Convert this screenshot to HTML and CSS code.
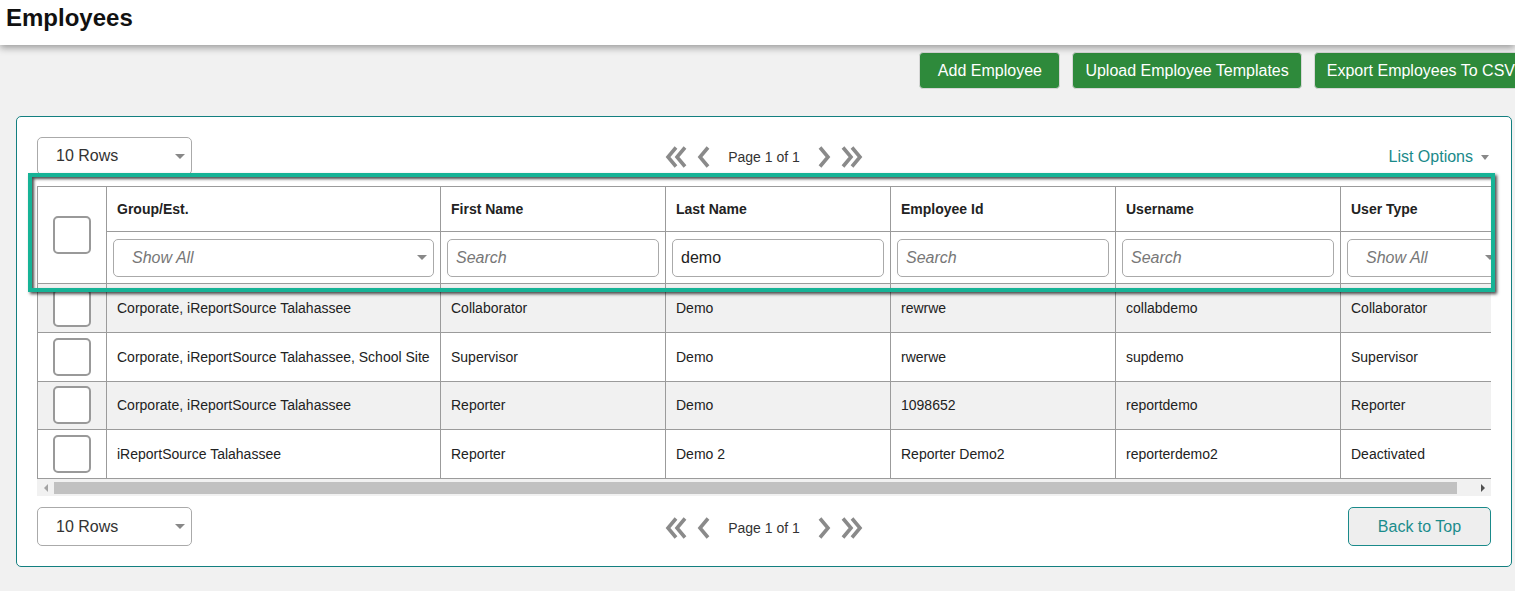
FILE: index.html
```html
<!DOCTYPE html>
<html lang="en">
<head>
    <meta charset="UTF-8">
    <meta name="viewport" content="width=device-width, initial-scale=1.0">
    <title>Employees</title>
    <link rel="stylesheet" href="styles.css">
</head>
<body>
    <div class="page-header">
        <h1 class="page-title">Employees</h1>
    </div>

    <div class="actions">
        <button class="btn-green">Add Employee</button>
        <button class="btn-green">Upload Employee Templates</button>
        <button class="btn-green">Export Employees To CSV</button>
    </div>

    <div class="card">
        <div class="list-bar">
            <div class="select-box rows-select">
                <span>10 Rows</span>
                <span class="caret"></span>
            </div>
            <div class="pager">
                <svg class="chev-double" width="22" height="22" viewBox="0 0 22 22">
                    <polyline points="11,1.5 3,11 11,20.5" />
                    <polyline points="20,1.5 12,11 20,20.5" />
                </svg>
                <svg class="chev-single" width="13" height="22" viewBox="0 0 13 22">
                    <polyline points="11,1.5 3,11 11,20.5" />
                </svg>
                <span class="page-text">Page 1 of 1</span>
                <svg class="chev-single" width="13" height="22" viewBox="0 0 13 22">
                    <polyline points="2,1.5 10,11 2,20.5" />
                </svg>
                <svg class="chev-double" width="22" height="22" viewBox="0 0 22 22">
                    <polyline points="2,1.5 10,11 2,20.5" />
                    <polyline points="11,1.5 19,11 11,20.5" />
                </svg>
            </div>
            <div class="list-options">
                <span>List Options</span>
                <span class="caret small"></span>
            </div>
        </div>

        <div class="table-wrap">
            <table class="grid">
                <colgroup>
                    <col style="width: 69px">
                    <col style="width: 334px">
                    <col style="width: 225px">
                    <col style="width: 225px">
                    <col style="width: 225px">
                    <col style="width: 225px">
                    <col style="width: 168px">
                </colgroup>
                <thead>
                    <tr class="label-row">
                        <th rowspan="2" class="check-cell"><span class="checkbox"></span></th>
                        <th>Group/Est.</th>
                        <th>First Name</th>
                        <th>Last Name</th>
                        <th>Employee Id</th>
                        <th>Username</th>
                        <th>User Type</th>
                    </tr>
                    <tr class="filter-row">
                        <td>
                            <div class="select-box filter-select">
                                <span class="placeholder">Show All</span>
                                <span class="caret"></span>
                            </div>
                        </td>
                        <td><input class="filter-input" type="text" placeholder="Search"></td>
                        <td><input class="filter-input" type="text" value="demo"></td>
                        <td><input class="filter-input" type="text" placeholder="Search"></td>
                        <td><input class="filter-input" type="text" placeholder="Search"></td>
                        <td>
                            <div class="select-box filter-select">
                                <span class="placeholder">Show All</span>
                                <span class="caret"></span>
                            </div>
                        </td>
                    </tr>
                </thead>
                <tbody>
                    <tr>
                        <td class="check-cell"><span class="checkbox"></span></td>
                        <td>Corporate, iReportSource Talahassee</td>
                        <td>Collaborator</td>
                        <td>Demo</td>
                        <td>rewrwe</td>
                        <td>collabdemo</td>
                        <td>Collaborator</td>
                    </tr>
                    <tr>
                        <td class="check-cell"><span class="checkbox"></span></td>
                        <td>Corporate, iReportSource Talahassee, School Site</td>
                        <td>Supervisor</td>
                        <td>Demo</td>
                        <td>rwerwe</td>
                        <td>supdemo</td>
                        <td>Supervisor</td>
                    </tr>
                    <tr>
                        <td class="check-cell"><span class="checkbox"></span></td>
                        <td>Corporate, iReportSource Talahassee</td>
                        <td>Reporter</td>
                        <td>Demo</td>
                        <td>1098652</td>
                        <td>reportdemo</td>
                        <td>Reporter</td>
                    </tr>
                    <tr>
                        <td class="check-cell"><span class="checkbox"></span></td>
                        <td>iReportSource Talahassee</td>
                        <td>Reporter</td>
                        <td>Demo 2</td>
                        <td>Reporter Demo2</td>
                        <td>reporterdemo2</td>
                        <td>Deactivated</td>
                    </tr>
                </tbody>
            </table>
        </div>

        <div class="scrollbar">
            <div class="scroll-btn"><span class="tri-left"></span></div>
            <div class="scroll-track">
                <div class="scroll-thumb"></div>
            </div>
            <div class="scroll-btn"><span class="tri-right"></span></div>
        </div>

        <div class="list-bar bottom-bar">
            <div class="select-box rows-select">
                <span>10 Rows</span>
                <span class="caret"></span>
            </div>
            <div class="pager">
                <svg class="chev-double" width="22" height="22" viewBox="0 0 22 22">
                    <polyline points="11,1.5 3,11 11,20.5" />
                    <polyline points="20,1.5 12,11 20,20.5" />
                </svg>
                <svg class="chev-single" width="13" height="22" viewBox="0 0 13 22">
                    <polyline points="11,1.5 3,11 11,20.5" />
                </svg>
                <span class="page-text">Page 1 of 1</span>
                <svg class="chev-single" width="13" height="22" viewBox="0 0 13 22">
                    <polyline points="2,1.5 10,11 2,20.5" />
                </svg>
                <svg class="chev-double" width="22" height="22" viewBox="0 0 22 22">
                    <polyline points="2,1.5 10,11 2,20.5" />
                    <polyline points="11,1.5 19,11 11,20.5" />
                </svg>
            </div>
            <button class="btn-top">Back to Top</button>
        </div>

        <!-- tour highlight drawn over the table header -->
        <div class="tour-highlight"></div>
    </div>
</body>
</html>
```

FILE: styles.css
```css
* {
    box-sizing: border-box;
}

html, body {
    margin: 0;
    padding: 0;
}

body {
    font-family: "Liberation Sans", Arial, sans-serif;
    background-color: #f1f1f1;
    color: #222;
    overflow: hidden;
}

.page-header {
    position: relative;
    z-index: 1;
    height: 45px;
    padding-left: 6px;
    background-color: #fff;
    box-shadow: 0 3px 7px rgba(0, 0, 0, 0.35);
}

.page-title {
    margin: 0;
    font-size: 24px;
    line-height: 36px;
    font-weight: bold;
    color: #111;
}

.actions {
    display: flex;
    justify-content: flex-end;
    gap: 12px;
    margin: 7px -13px 0 0;
}

.btn-green {
    height: 37px;
    min-width: 141px;
    padding: 0 12px;
    background-color: #2e8a3b;
    color: #fff;
    border: 1px solid #d6d6d6;
    border-radius: 4px;
    font-family: "Liberation Sans", Arial, sans-serif;
    font-size: 16px;
}

.card {
    position: relative;
    width: 1496px;
    margin: 27px 0 0 16px;
    padding: 20px;
    background-color: #fff;
    border: 1px solid #137f80;
    border-radius: 5px;
}

.list-bar {
    display: grid;
    grid-template-columns: 1fr auto 1fr;
    align-items: center;
    height: 38px;
}

.list-bar .page-text {
    position: relative;
}

.bottom-bar {
    height: 39px;
    margin-top: 11px;
}

.select-box {
    display: flex;
    align-items: center;
    justify-content: space-between;
    height: 38px;
    padding: 0 6px 0 18px;
    border: 1px solid #aaa;
    border-radius: 5px;
    font-size: 16px;
    color: #333;
    background-color: #fff;
}

.rows-select {
    width: 155px;
}

.bottom-bar .rows-select {
    height: 39px;
}

.caret {
    display: inline-block;
    width: 0;
    height: 0;
    border-left: 5px solid transparent;
    border-right: 5px solid transparent;
    border-top: 5px solid #888;
}

.caret.small {
    border-left-width: 4px;
    border-right-width: 4px;
    border-top-width: 5px;
    margin-left: 8px;
}

.pager {
    display: flex;
    align-items: center;
    padding-top: 2px;
}

.pager svg polyline {
    fill: none;
    stroke: #8a8a8a;
    stroke-width: 3.6;
}

.chev-single {
    margin: 0 0 0 10px;
}

.page-text {
    margin: 0 18px;
    font-size: 14px;
    color: #333;
}

.pager .page-text + .chev-single {
    margin: 0 10px 0 0;
}

.list-options {
    justify-self: end;
    display: flex;
    align-items: center;
    padding-right: 2px;
    padding-top: 2px;
    font-size: 16px;
    color: #1a8a8a;
}

.table-wrap {
    width: 1454px;
    margin-top: 11px;
    overflow: hidden;
}

.grid {
    width: 1471px;
    table-layout: fixed;
    border-collapse: collapse;
    font-size: 14px;
    color: #222;
}

.grid th,
.grid td {
    border: 1px solid #9b9b9b;
    padding: 0 10px;
    text-align: left;
    white-space: nowrap;
    overflow: hidden;
}

.grid th {
    font-weight: bold;
}

.label-row th {
    height: 45px;
}

.filter-row td {
    height: 52px;
    padding: 0 6px;
}

.grid tbody td {
    height: 48.75px;
}

.grid tbody tr:nth-child(odd) {
    background-color: #f1f1f1;
}

.grid .check-cell {
    padding: 0;
    text-align: center;
    vertical-align: middle;
}

.checkbox {
    display: inline-block;
    width: 38px;
    height: 38px;
    vertical-align: middle;
    border: 2px solid #999;
    border-radius: 5px;
    background-color: #fff;
}

.filter-select {
    width: 100%;
}

.placeholder {
    font-style: italic;
    color: #777;
}

.filter-input {
    display: block;
    width: 100%;
    height: 38px;
    padding: 0 8px;
    border: 1px solid #aaa;
    border-radius: 5px;
    font-family: "Liberation Sans", Arial, sans-serif;
    font-size: 16px;
    color: #222;
}

.filter-input::placeholder {
    font-style: italic;
    color: #777;
}

.scrollbar {
    display: flex;
    align-items: center;
    width: 1454px;
    height: 17px;
    background-color: #f1f1f1;
}

.scroll-btn {
    width: 17px;
    height: 17px;
    display: flex;
    justify-content: center;
    align-items: center;
}

.tri-left,
.tri-right {
    width: 0;
    height: 0;
    border-top: 4px solid transparent;
    border-bottom: 4px solid transparent;
}

.tri-left {
    border-right: 4px solid #a3a3a3;
}

.tri-right {
    border-left: 4px solid #505050;
}

.scroll-track {
    flex-grow: 1;
}

.scroll-thumb {
    width: 1403px;
    height: 12px;
    background-color: #c1c1c1;
}

.btn-top {
    justify-self: end;
    width: 143px;
    height: 39px;
    background-color: #eee;
    border: 1px solid #1a8a8a;
    border-radius: 5px;
    color: #1a8c8c;
    font-family: "Liberation Sans", Arial, sans-serif;
    font-size: 16px;
}

.tour-highlight {
    position: absolute;
    left: 11px;
    top: 56px;
    width: 1467px;
    height: 119px;
    border: 4px solid #16b396;
    box-shadow: 2px 2px 3px rgba(0, 0, 0, 0.7), inset 2px 2px 3px rgba(0, 0, 0, 0.7);
    pointer-events: none;
}
```
